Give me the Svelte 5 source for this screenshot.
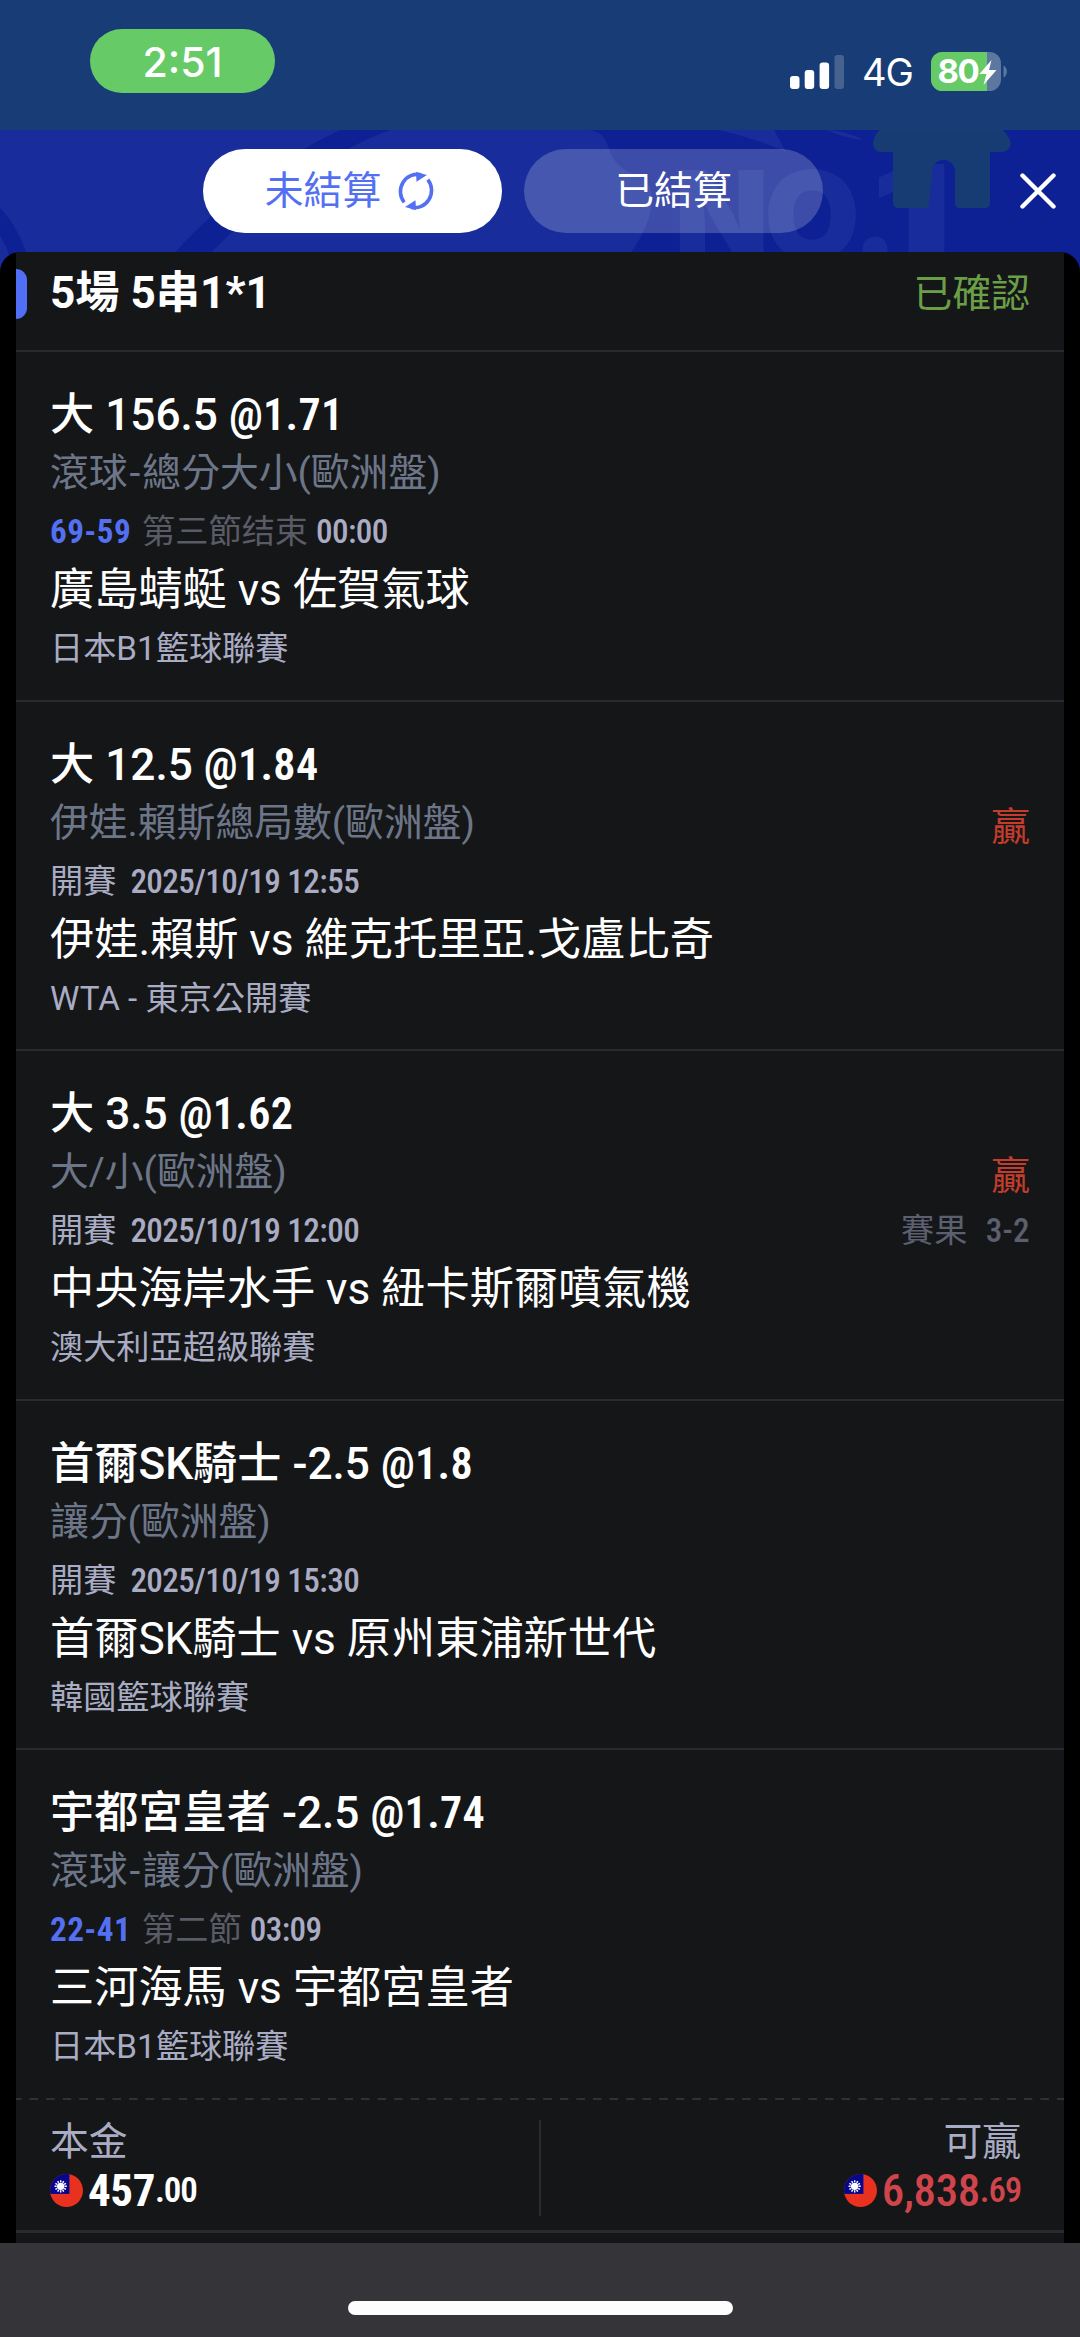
<script lang="ts">
  interface Bet {
    pick: string;
    odds: string;
    market: string;
    score?: string;
    period?: string;
    clock?: string;
    start?: string;
    match: string;
    league: string;
    won?: boolean;
    result?: string;
  }

  const bets: Bet[] = [
    {
      pick: '大 156.5',
      odds: '@1.71',
      market: '總分大小(歐洲盤)',
      score: '69-59',
      period: '第三節结束',
      clock: '00:00',
      match: '廣島蜻蜓 vs 佐賀氣球',
      league: '日本B1籃球聯賽'
    },
    {
      pick: '大 12.5',
      odds: '@1.84',
      market: '伊娃.賴斯總局數(歐洲盤)',
      start: '2025/10/19 12:55',
      match: '伊娃.賴斯 vs 維克托里亞.戈盧比奇',
      league: 'WTA - 東京公開賽',
      won: true
    },
    {
      pick: '大 3.5',
      odds: '@1.62',
      market: '大/小(歐洲盤)',
      start: '2025/10/19 12:00',
      match: '中央海岸水手 vs 紐卡斯爾噴氣機',
      league: '澳大利亞超級聯賽',
      won: true,
      result: '3-2'
    },
    {
      pick: '首爾SK騎士 -2.5',
      odds: '@1.8',
      market: '讓分(歐洲盤)',
      start: '2025/10/19 15:30',
      match: '首爾SK騎士 vs 原州東浦新世代',
      league: '韓國籃球聯賽'
    },
    {
      pick: '宇都宮皇者 -2.5',
      odds: '@1.74',
      market: '讓分(歐洲盤)',
      score: '22-41',
      period: '第二節',
      clock: '03:09',
      match: '三河海馬 vs 宇都宮皇者',
      league: '日本B1籃球聯賽'
    }
  ];

  const rays = Array.from({ length: 12 }, (_, i) => i * 30);
</script>

{#snippet flag()}
  <svg class="flag" viewBox="0 0 34 34">
    <clipPath id="round"><circle cx="17" cy="17" r="17" /></clipPath>
    <g clip-path="url(#round)">
      <rect width="34" height="34" fill="#e8321f" />
      <rect width="20" height="20.5" fill="#050590" />
      {#each rays as angle}
        <path d="M11 8.6 V6.4" stroke="#fff" stroke-width="1.5" transform="rotate({angle} 11 12.7)" />
      {/each}
      <circle cx="11" cy="12.7" r="3.8" fill="#fff" />
    </g>
  </svg>
{/snippet}

<div class="screen">
  <div class="status">
    <div class="time">2:51</div>
    <div class="indicators">
      <svg class="signal" width="54" height="34" viewBox="0 0 54 34">
        <rect x="0" y="21" width="9.5" height="13" rx="3" fill="#fff" />
        <rect x="14.7" y="15" width="9.5" height="19" rx="3" fill="#fff" />
        <rect x="29.6" y="7.5" width="9.5" height="26.5" rx="3" fill="#fff" />
        <rect x="44.5" y="0" width="9.5" height="34" rx="3" fill="#fff" opacity="0.2" />
      </svg>
      <span class="network">4G</span>
      <svg class="battery" width="77" height="39" viewBox="0 0 77 39">
        <clipPath id="cell"><rect width="70" height="39" rx="11.5" /></clipPath>
        <g clip-path="url(#cell)">
          <rect width="70" height="39" fill="#5c78a0" />
          <rect width="56" height="39" fill="#66cb67" />
        </g>
        <path d="M72.5 13.5 C77 15.5 77 23.5 72.5 25.5 Z" fill="#5c78a0" />
        <text x="6.5" y="31" class="level">80</text>
        <path d="M60.5 8 L48.5 22 H55.5 L52.5 33 L65.5 18 H58 Z" fill="#fff" />
      </svg>
    </div>
  </div>

  <header class="toolbar">
    <svg class="backdrop" viewBox="0 0 1080 160">
      <rect width="1080" height="160" fill="#182d9b" />
      <path d="M585 0 C600 0 604 6 608 16 C614 34 622 40 638 46 C652 52 654 66 650 84 C645 101 638 113 631 122 V160 H1080 V0 Z" fill="#0d2094" />
      <path d="M340 0 H390 C330 22 260 70 206 128 L170 128 C218 74 274 32 340 0 Z" fill="#0d2094" />
      <path d="M0 78 C12 90 22 108 28 128 H10 C7 118 4 112 0 106 Z" fill="#0d2094" />
      <path d="M719 0 H774 L786 22 C768 14 745 6 719 0 Z" fill="#182d9b" />
      <path d="M826 0 C842 1 854 5 864 10 C850 9 838 5 826 0 Z" fill="#182d9b" />
      <text class="rank" x="674 764 852" y="130">NO.</text>
      <text class="rank" transform="translate(871 124) scale(1.46 1)">1</text>
      <path
        d="M880 0 H1003 C1009 6 1012 13 1010 17 C1008 21 1004 22 999 22 H990 V73 Q990 78 985 78 H960 Q955 78 955 73 V42 C955 26 932 26 932 42 L929 73 Q929 78 924 78 H899 Q893 78 893 72 V22 H881 C875 22 873 17 873 13 C874 7 876 3 880 0 Z"
        fill="#173c74"
      />
    </svg>
    <button class="tab active">
      未結算
      <svg class="refresh" width="38" height="40" viewBox="0 0 38 40">
        <g fill="none" stroke="#5470f2" stroke-width="3.6">
          <path d="M7.2 31.4 A16.8 17.2 0 0 1 24 3.8" />
          <path d="M30.8 8.6 A16.8 17.2 0 0 1 14 36.2" />
        </g>
        <path d="M19 1 L30 4 L19.5 10.8 Z" fill="#5470f2" />
        <path d="M19 39 L8 36 L18.5 29.2 Z" fill="#5470f2" />
      </svg>
    </button>
    <button class="tab">已結算</button>
    <button class="close" aria-label="關閉">
      <svg width="36" height="36" viewBox="0 0 36 36">
        <path d="M2.5 2.5 L33.5 33.5 M33.5 2.5 L2.5 33.5" stroke="#fff" stroke-width="4.4" stroke-linecap="round" />
      </svg>
    </button>
  </header>

  <main class="sheet">
    <section class="ticket">
      <div class="summary">
        <span class="marker"></span>
        <h1>5場 5串1*1</h1>
        <span class="confirmed">已確認</span>
      </div>

      {#each bets as bet}
        <article class="bet">
          <div class="details">
            <h2>{bet.pick} <span class="odds">{bet.odds}</span></h2>
            <p class="market">{#if bet.score}滾球<span class="dash">-</span>{/if}{bet.market}</p>
            <p class="timing">
              {#if bet.score}
                <span class="digits score">{bet.score}</span>
                <span class="period">{bet.period}</span>
                <span class="digits">{bet.clock}</span>
              {:else}
                <span>開賽</span>
                <span class="digits date">{bet.start}</span>
              {/if}
            </p>
            <p class="match">{bet.match}</p>
            <p class="league">{bet.league}</p>
          </div>
          <div class="outcome">
            {#if bet.won}
              <span class="won">贏</span>
            {/if}
            {#if bet.result}
              <span class="result">賽果 <span class="digits">{bet.result}</span></span>
            {/if}
          </div>
        </article>
      {/each}

      <svg class="dashes" width="1048" height="2" viewBox="0 0 1048 2">
        <path d="M-3 1 H1048" stroke="#303133" stroke-width="2" stroke-dasharray="8.6 7.97" />
      </svg>

      <footer class="totals">
        <div class="stake">
          <span class="label">本金</span>
          <span class="amount">{@render flag()}457<small>.00</small></span>
        </div>
        <div class="separator"></div>
        <div class="payout">
          <span class="label">可贏</span>
          <span class="amount">{@render flag()}6,838<small>.69</small></span>
        </div>
      </footer>
    </section>
  </main>

  <div class="home"><span></span></div>
</div>

<style>
  :global(body) {
    margin: 0;
    background: #000;
  }

  .screen {
    width: 1080px;
    height: 2337px;
    display: flex;
    flex-direction: column;
    overflow: hidden;
    color: #fff;
    font-family: Roboto, 'Noto Sans CJK TC', sans-serif;
  }

  .status {
    height: 130px;
    flex: none;
    display: flex;
    justify-content: space-between;
    align-items: flex-start;
    box-sizing: border-box;
    padding: 29px 72px 0 90px;
    background: #183c75;
    font-family: Inter, sans-serif;
  }

  .time {
    width: 185px;
    height: 64px;
    border-radius: 32px;
    background: #66cb67;
    font-size: 41px;
    font-weight: 500;
    line-height: 66px;
    text-align: center;
  }

  .indicators {
    display: flex;
    align-items: center;
    padding-top: 23px;
    height: 39px;
  }

  .network {
    width: 50px;
    margin: 2px 19px 0 18px;
    font-size: 38px;
    letter-spacing: -1px;
    line-height: 39px;
  }

  .battery {
    overflow: visible;
  }

  .level {
    font-size: 33px;
    font-weight: 700;
    letter-spacing: -1.5px;
    fill: #fff;
  }

  .toolbar {
    position: relative;
    height: 122px;
    flex: none;
    display: flex;
    gap: 22px;
    box-sizing: border-box;
    padding: 19px 22px 0 203px;
  }

  .backdrop {
    position: absolute;
    inset: 0;
    width: 1080px;
    height: 160px;
  }

  .rank {
    font-family: Inter, sans-serif;
    font-size: 124px;
    font-weight: 900;
    fill: #182d9b;
  }

  button {
    border: 0;
    padding: 0;
    color: inherit;
    font: inherit;
  }

  .tab {
    position: relative;
    display: flex;
    align-items: center;
    justify-content: center;
    gap: 16px;
    width: 299px;
    height: 84px;
    border-radius: 42px;
    background: rgba(255, 255, 255, 0.2);
    font-size: 38.8px;
    line-height: 80px;
  }

  .active {
    box-sizing: border-box;
    padding-right: 5px;
    background: #fff;
    color: #5470f2;
  }

  .close {
    position: relative;
    display: flex;
    align-items: center;
    margin-left: auto;
    height: 84px;
    padding-right: 2px;
    background: none;
  }

  .sheet {
    position: relative;
    height: 1991px;
    flex: none;
    padding: 0 16px;
    background: #000;
    border-radius: 20px 20px 0 0;
  }

  .ticket {
    height: 100%;
    background: #151618;
  }

  .summary {
    height: 98px;
    display: flex;
    padding-right: 34px;
    line-height: 83px;
  }

  .marker {
    width: 11px;
    height: 50px;
    margin: 17px 23px 0 0;
    border-radius: 0 11px 11px 0;
    background: #506ff5;
  }

  h1,
  h2,
  p {
    margin: 0;
    white-space: nowrap;
  }

  h1 {
    font-size: 44.2px;
    font-weight: 700;
  }

  .confirmed {
    margin-left: auto;
    color: #6a9f48;
    font-size: 38.8px;
  }

  .bet {
    display: flex;
    justify-content: space-between;
    box-sizing: border-box;
    height: 349.6px;
    padding: 34px 34px 0 34px;
    border-top: 2px solid #292a2d;
  }

  h2 {
    font-size: 44.2px;
    font-weight: 500;
    line-height: 58px;
  }

  .odds {
    font-stretch: 87.5%;
    font-weight: 600;
    letter-spacing: 0.3px;
  }

  .market {
    color: #6d7688;
    font-size: 38.8px;
    line-height: 58px;
  }

  .dash {
    margin: 0 2px;
  }

  .timing {
    display: flex;
    height: 61px;
    color: #a9acc3;
    font-size: 33.2px;
    line-height: 60px;
  }

  .digits {
    font-stretch: 87.5%;
    font-weight: 500;
    letter-spacing: -0.6px;
  }

  .date {
    margin-left: 14px;
  }

  .score {
    margin-right: 11px;
    color: #5470f2;
    font-weight: 700;
    letter-spacing: 0.4px;
  }

  .period {
    margin-right: 8px;
    color: #595b66;
  }

  .match {
    font-size: 44.2px;
    line-height: 55px;
  }

  .league {
    color: #a9acc3;
    font-size: 33.2px;
    line-height: 62px;
  }

  .outcome {
    display: flex;
    flex-direction: column;
    align-items: flex-end;
    padding-top: 62px;
  }

  .won {
    color: #c33d2c;
    font-size: 38.8px;
    line-height: 58px;
  }

  .result {
    color: #5b5f6f;
    font-size: 33.2px;
    line-height: 52px;
  }

  .result .digits {
    margin-left: 10px;
    letter-spacing: 0.3px;
  }

  .dashes {
    display: block;
  }

  .totals {
    display: flex;
    justify-content: space-between;
    box-sizing: border-box;
    height: 133px;
    padding: 17px 43px 0 34px;
    border-bottom: 3px solid #292a2d;
  }

  .stake,
  .payout {
    width: 460px;
    display: flex;
    flex-direction: column;
  }

  .stake {
    width: 469px;
  }

  .payout {
    align-items: flex-end;
  }

  .label {
    color: #a9acc3;
    font-size: 38.8px;
    line-height: 50px;
  }

  .amount {
    display: flex;
    align-items: center;
    font-size: 45px;
    font-stretch: 80%;
    font-weight: 700;
    letter-spacing: -0.4px;
    line-height: 48px;
  }

  .amount small {
    font-size: 35px;
    font-stretch: 78%;
    font-weight: 600;
    letter-spacing: -1.2px;
  }

  .payout .amount {
    color: #cf454b;
    font-weight: 500;
  }

  .payout small {
    font-weight: 500;
  }

  .flag {
    width: 33px;
    height: 33px;
    margin-right: 5px;
  }

  .separator {
    width: 2px;
    height: 96px;
    margin-top: 3px;
    background: #2a2b2e;
  }

  .home {
    flex: 1;
    background: #353539;
  }

  .home span {
    display: block;
    width: 385px;
    height: 14px;
    margin: 58px auto 0;
    border-radius: 7px;
    background: #fdfdfd;
  }
</style>
